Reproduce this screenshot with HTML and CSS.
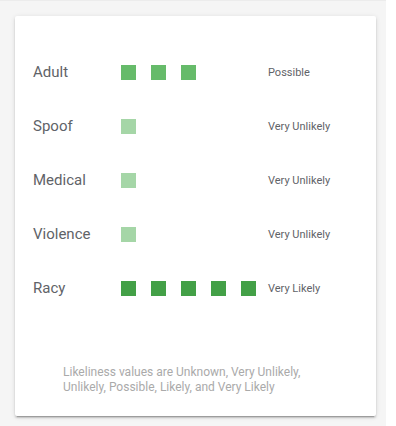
FILE: index.html
```html
<!DOCTYPE html>
<html lang="en">
<head>
  <meta charset="UTF-8">
  <meta name="viewport" content="width=device-width, initial-scale=1.0">
  <title>Safe Search</title>
  <link rel="stylesheet" href="styles.css">
</head>
<body>
  <div class="page">
    <div class="card">
      <div class="row">
        <span class="name">Adult</span>
        <span class="bars">
          <i class="sq mid"></i><i class="sq mid"></i><i class="sq mid"></i>
        </span>
        <span class="value">Possible</span>
      </div>
      <div class="row">
        <span class="name">Spoof</span>
        <span class="bars"><i class="sq low"></i></span>
        <span class="value">Very Unlikely</span>
      </div>
      <div class="row">
        <span class="name">Medical</span>
        <span class="bars"><i class="sq low"></i></span>
        <span class="value">Very Unlikely</span>
      </div>
      <div class="row">
        <span class="name">Violence</span>
        <span class="bars"><i class="sq low"></i></span>
        <span class="value">Very Unlikely</span>
      </div>
      <div class="row">
        <span class="name">Racy</span>
        <span class="bars">
          <i class="sq high"></i><i class="sq high"></i><i class="sq high"></i><i class="sq high"></i><i class="sq high"></i>
        </span>
        <span class="value">Very Likely</span>
      </div>

      <p class="note">Likeliness values are Unknown, Very Unlikely, Unlikely, Possible, Likely, and Very Likely</p>
    </div>
  </div>
</body>
</html>
```

FILE: styles.css
```css
body {
  margin: 0;
  background-color: #ffffff;
  font-family: Roboto, "Liberation Sans", sans-serif;
}

.page {
  width: 386px;
  height: 426px;
  box-sizing: border-box;
  background-color: #f5f5f5;
  border-top: 1px solid #ececec;
  padding: 15px 10px 0 15px;
}

.card {
  width: 361px;
  height: 400px;
  box-sizing: border-box;
  background-color: #ffffff;
  border-radius: 2px;
  box-shadow: 0 2px 2px 0 rgba(0, 0, 0, 0.14), 0 3px 1px -2px rgba(0, 0, 0, 0.2), 0 1px 5px 0 rgba(0, 0, 0, 0.12);
  padding: 29px 18px 0 18px;
}

.row {
  display: flex;
  align-items: center;
  height: 54px;
}

.name {
  width: 88px;
  font-size: 15px;
  color: #5f6368;
}

.bars {
  display: flex;
  gap: 15px;
  width: 147px;
}

.sq {
  display: block;
  width: 15px;
  height: 15px;
}

.low {
  background-color: #a5d6a7;
}

.mid {
  background-color: #66bb6a;
}

.high {
  background-color: #43a047;
}

.value {
  font-size: 11px;
  color: #5f6368;
}

.note {
  margin: 50px 0 0 30px;
  width: 250px;
  font-size: 12px;
  line-height: 15px;
  color: #aaaaaa;
}
```
